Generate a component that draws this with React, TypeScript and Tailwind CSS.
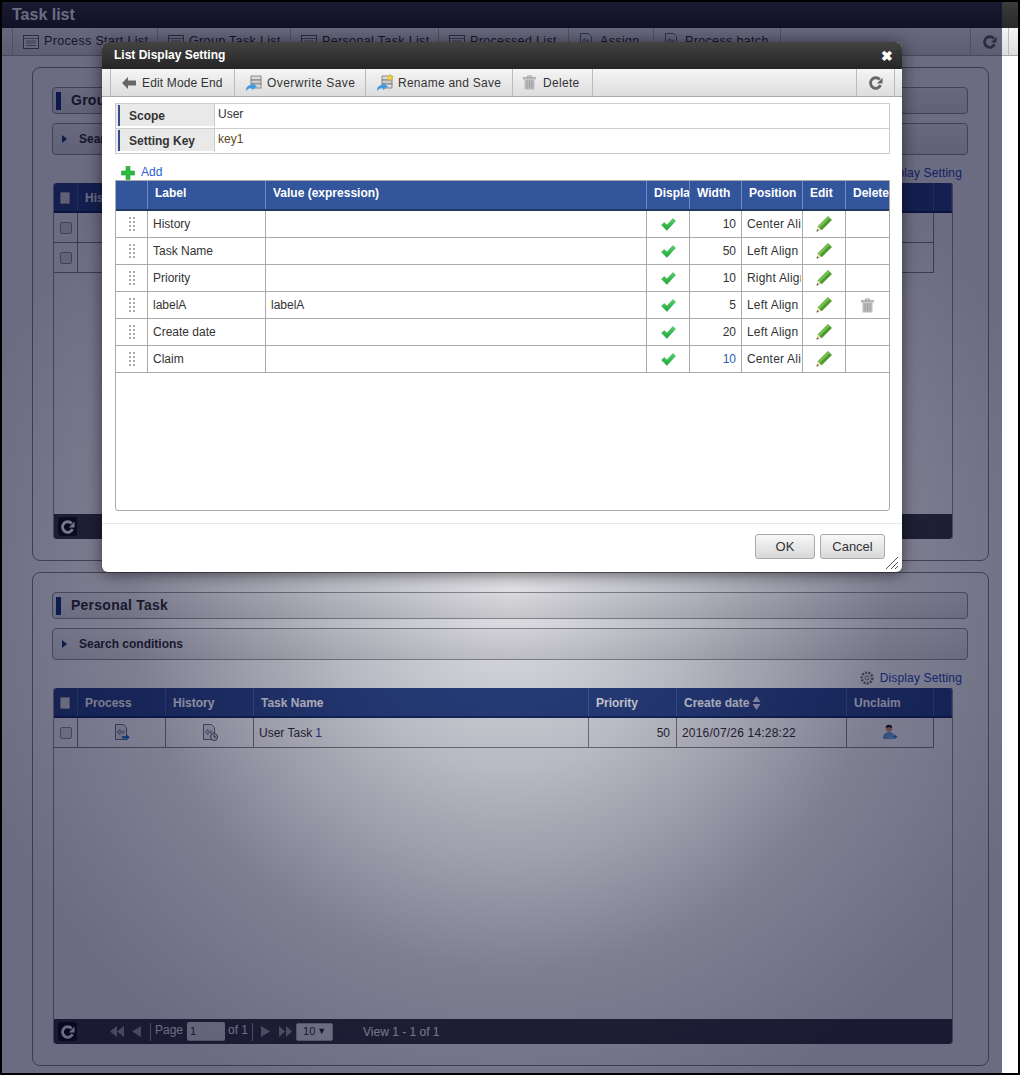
import React from "react";

const font = { fontFamily: '"Liberation Sans", Arial, sans-serif' };

function ListIcon() {
  return (
    <svg width="16" height="14" viewBox="0 0 16 14" className="shrink-0">
      <rect x="0.5" y="0.5" width="15" height="13" fill="#f4f4f4" stroke="#666" />
      <path d="M0.5 3.5h15" stroke="#888" />
      <path d="M3 6h10M3 8h10M3 10.500h10" stroke="#888" />
    </svg>
  );
}
function DocIcon({ badge }: { badge?: "arrow" | "clock" | "none" }) {
  return (
    <svg width="16" height="17" viewBox="0 0 16 17" className="shrink-0">
      <path d="M1.500 0.500h8l3 3v12h-11z" fill="#e9edf2" stroke="#6c7480" />
      <path d="M3 8l3-3v2h4v2h-4v2z" fill="#b8bec8" stroke="#7a808c" strokeWidth="0.6" />
      {badge === "arrow" && <path d="M8 12h4v-2l4 3.200-4 3.200v-2h-4z" fill="#2b7fd0" />}
      {badge === "clock" && (
        <g>
          <circle cx="12" cy="13" r="3.500" fill="#eee" stroke="#555" />
          <path d="M12 11v2h2" stroke="#444" fill="none" />
        </g>
      )}
    </svg>
  );
}
function PersonIcon() {
  return (
    <svg width="16" height="17" viewBox="0 0 16 17">
      <circle cx="7" cy="4.500" r="3.200" fill="#d49a70" />
      <path d="M3.800 4a3.200 3.200 0 0 1 6.400 0c-2 -1-4.400-1-6.400 0z" fill="#2e2018" />
      <path d="M1 15c0-5 2-7 6-7s6 2 6 7z" fill="#6fa8dc" />
      <path d="M8 12h4v-2l4 2.800-4 2.800v-2h-4z" fill="#2a86d8" stroke="#fff" strokeWidth="0.4" />
    </svg>
  );
}
function ServerIcon({ star }: { star?: boolean }) {
  return (
    <svg width="18" height="18" viewBox="0 0 18 18" className="shrink-0">
      <rect x="6" y="2" width="10" height="4" fill="#d8dbe0" stroke="#777" strokeWidth="0.8" />
      <rect x="6" y="6" width="10" height="4" fill="#c9ccd2" stroke="#777" strokeWidth="0.8" />
      <rect x="6" y="10" width="10" height="4" fill="#d8dbe0" stroke="#777" strokeWidth="0.8" />
      <path d="M1 17c0-4 2-6 6-6v-2l5 3.500-5 3.500v-2c-3 0-4 1-6 3z" fill="#3f9ae0" />
      {star && <path d="M14 0l1 2.200 2.500.3-1.800 1.700.5 2.500-2.200-1.200-2.200 1.200.5-2.500-1.800-1.700 2.500-.3z" fill="#f3d53c" stroke="#c9a614" strokeWidth="0.4" />}
    </svg>
  );
}
function Trash({ size = 14 }: { size?: number }) {
  return (
    <svg width={size - 1} height={size + 1} viewBox="0 0 13 15" className="shrink-0">
      <path d="M4.500 1h4v1.500h-4z" fill="none" stroke="#9a9a9a" />
      <rect x="0.300" y="2.300" width="12.400" height="1.800" fill="#bdbdbd" stroke="#999" strokeWidth="0.5" />
      <path d="M1.500 4.500h10v10h-10z" fill="#bcbcc0" />
      <path d="M4 5.500v8M6.500 5.500v8M9 5.500v8" stroke="#929296" strokeWidth="0.8" />
    </svg>
  );
}
function Reload({ color = "#666", size = 16 }: { color?: string; size?: number }) {
  return (
    <svg width={size} height={size} viewBox="0 0 16 16" className="shrink-0">
      <path d="M13.200 10.500a6 6 0 1 1-1-6.500" fill="none" stroke={color} strokeWidth="3.200" />
      <path d="M15.500 2v6.500h-6.500z" fill={color} />
    </svg>
  );
}
function Check() {
  return (
    <svg width="15" height="13" viewBox="0 0 15 13">
      <defs>
        <linearGradient id="chk" x1="0" y1="0" x2="0" y2="1">
          <stop offset="0" stopColor="#52d468" />
          <stop offset="1" stopColor="#1fa53a" />
        </linearGradient>
      </defs>
      <path d="M0.500 7l2.800-2.600 2.600 2.600 6-6.500 2.600 2.400-8.600 9.600z" fill="url(#chk)" stroke="#1f9a38" strokeWidth="0.4" />
    </svg>
  );
}
function Pencil() {
  return (
    <svg width="16" height="16" viewBox="0 0 16 16">
      <path d="M12 0.500l3.500 3.500-10 10-3.500-3.500z" fill="#4a9a2c" stroke="#2f7a1a" strokeWidth="0.6" />
      <path d="M12 0.500l1.700 1.700-10 10-1.700-1.700z" fill="#74c24a" />
      <path d="M2 10.500l3.500 3.500-5 1.500z" fill="#e8d5a8" />
      <path d="M0.500 15.500l0.600-2.200 1.600 1.600z" fill="#444" />
    </svg>
  );
}
function Gear() {
  return (
    <svg width="14" height="14" viewBox="0 0 14 14">
      <circle cx="7" cy="7" r="5.300" fill="none" stroke="#777" strokeWidth="2.600" strokeDasharray="2 1.200" />
      <circle cx="7" cy="7" r="2" fill="none" stroke="#777" />
    </svg>
  );
}
function Plus() {
  return (
    <svg width="14" height="14" viewBox="0 0 14 14">
      <path d="M5 0.500h4v4.500h4.500v4h-4.500v4.500h-4v-4.500h-4.500v-4h4.500z" fill="#2dbb3f" stroke="#1e9a30" strokeWidth="0.6" />
    </svg>
  );
}
function Handle() {
  return (
    <svg width="6" height="14" viewBox="0 0 6 14">
      {[0, 4, 8, 12].map((y) => (
        <g key={y} fill="#aaaaaa">
          <rect x="0" y={y} width="2" height="2" />
          <rect x="4" y={y} width="2" height="2" />
        </g>
      ))}
    </svg>
  );
}

function TabItem({ w, label, badge }: { w: string; label: string; badge?: boolean }) {
  return (
    <div className={`${w} h-full flex items-center gap-[5px] pl-[10px] border-r border-[#bbb] text-[12.500px] text-[#333] whitespace-nowrap tracking-[0.35px]`}>
      {badge ? <DocIcon badge="none" /> : <ListIcon />}
      {label}
    </div>
  );
}

const taskCols = [
  { w: "w-[24px]", label: "" },
  { w: "w-[88px]", label: "Process" },
  { w: "w-[88px]", label: "History" },
  { w: "w-[335px]", label: "Task Name" },
  { w: "w-[88px]", label: "Priority" },
  { w: "w-[170px]", label: "Create date" },
  { w: "w-[87px]", label: "Unclaim" },
  { w: "flex-1", label: "" },
];

function CheckBox() {
  return <span className="block w-[12px] h-[12px] rounded-[2px] border border-[#999] bg-[#e8e8e8]" />;
}

function TaskHeader({ cols }: { cols: { w: string; label: string }[] }) {
  return (
    <div className="flex h-[30px] bg-[#2f4a8a] border-b-2 border-[#173067] rounded-t-[3px] text-[12px] font-bold text-white">
      {cols.map((c, i) => (
        <div key={i} className={`${c.w} flex items-center pt-[1px] border-r border-[#4a68a8] px-[7px] gap-[3px] whitespace-nowrap overflow-hidden`}>
          {i === 0 && <span className="block w-[12px] h-[12px] -ml-[1px] rounded-[1px] bg-[#e4e4e4] border border-[#aaa]" />}
          {c.label}
          {c.label === "Create date" && (
            <svg width="9" height="14" viewBox="0 0 9 14">
              <path d="M4.500 0l4 6h-8z M4.500 14l4-6h-8z" fill="#c8cfe0" />
            </svg>
          )}
        </div>
      ))}
    </div>
  );
}

function TaskRow({ name }: { name: string }) {
  return (
    <div className="flex w-[880px] h-[30px] border-b border-r border-[#888] text-[12px] text-[#333]">
      <div className="w-[24px] flex items-center justify-center border-r border-[#888]"><CheckBox /></div>
      <div className="w-[88px] flex items-center justify-center border-r border-[#888]"><DocIcon badge="arrow" /></div>
      <div className="w-[88px] flex items-center justify-center border-r border-[#888]"><DocIcon badge="clock" /></div>
      <div className="w-[335px] flex items-center px-[5px] border-r border-[#888]">
        {name} <span className="text-[#2a4fa0] ml-[3px]">1</span>
      </div>
      <div className="w-[88px] flex items-center justify-end px-[6px] border-r border-[#888]">50</div>
      <div className="w-[170px] flex items-center px-[5px] border-r border-[#888] tracking-[0.2px]">2016/07/26 14:28:22</div>
      <div className="flex-1 flex items-center justify-center"><PersonIcon /></div>
    </div>
  );
}

function Panel({ title, rows, cols, pager }: { title: string; rows: number; cols: { w: string; label: string }[]; pager?: boolean }) {
  return (
    <section className="w-[957px] h-[494px] border border-[#8a8a8a] rounded-[8px] pl-[19px] pr-[20px] pt-[19px]">
      <div className="h-[27px] border border-[#999] rounded-[4px] flex items-center bg-gradient-to-b from-[#f7f7f7] to-[#e6e6e6]">
        <span className="block w-[5px] h-[18px] ml-[3px] bg-[#1f3a80]" />
        <span className="ml-[10px] font-bold text-[14px] tracking-[0.25px] text-[#333]">{title}</span>
      </div>
      <div className="h-[32px] mt-[9px] border border-[#999] rounded-[4px] flex items-center bg-gradient-to-b from-[#f7f7f7] to-[#e6e6e6]">
        <svg width="5" height="8" viewBox="0 0 5 8" className="ml-[9px]"><path d="M0 0l5 4-5 4z" fill="#1f3a80" /></svg>
        <span className="ml-[12px] font-bold text-[12px] text-[#333]">Search conditions</span>
      </div>
      <div className="h-[28px] pt-[8px] flex items-center justify-end gap-[6px] pr-[6px] text-[12px] text-[#2a4fb5] tracking-[0.15px]">
        <Gear />
        <span>Display Setting</span>
      </div>
      <div className="w-[900px] h-[356px] ml-[1px] flex flex-col rounded-[3px] border-x border-[#999]">
        <TaskHeader cols={cols} />
        <div className="flex-1">
          {Array.from({ length: rows }).map((_, i) => (
            <TaskRow key={i} name="User Task" />
          ))}
        </div>
        <div className="h-[25px] bg-[#3e3e44] rounded-b-[3px] flex items-center pl-[4px] text-[12px] text-white">
          <span className="w-[19px] h-[19px] rounded-[3px] bg-[#15151f] flex items-center justify-center">
            <Reload color="#fff" size={14} />
          </span>
          {pager && (
            <div className="flex items-center ml-[33px]">
              <svg width="33" height="11" viewBox="0 0 33 11">
                <path d="M7 0v11l-7-5.500zM14 0v11l-7-5.500zM31 0v11l-9-5.500z" fill="#aaa" />
              </svg>
              <span className="block w-px h-[18px] bg-[#aaa] ml-[7px] mr-[4px]" />
              <span className="-mt-[3px]">Page</span>
              <span className="block w-[38px] h-[19px] ml-[4px] mr-[3px] rounded-[2px] bg-[#e8e8e8] border-b border-[#bbb] text-[#333] text-[11px] pl-[3px] leading-[19px]">1</span>
              <span className="-mt-[3px]">of 1</span>
              <span className="block w-px h-[18px] bg-[#aaa] ml-[4px] mr-[8px]" />
              <svg width="31" height="11" viewBox="0 0 31 11" className="mr-[4px]">
                <path d="M0 0v11l9-5.500zM18 0v11l6-5.500zM25 0v11l6-5.500z" fill="#aaa" />
              </svg>
              <span className="w-[37px] h-[18px] rounded-[2px] bg-[#eee] border border-[#bbb] flex items-center justify-between px-[6px] text-[#333] text-[11px]">
                10 <span className="text-[9px]">▼</span>
              </span>
              <span className="ml-[30px] font-normal">View 1 - 1 of 1</span>
            </div>
          )}
        </div>
      </div>
    </section>
  );
}

function ToolBtn({ w, icon, label, track }: { w: string; icon: React.ReactNode; label: string; track: string }) {
  return (
    <div className={`${w} ${track} h-full flex items-center gap-[4px] pl-[10px] border-r border-[#bbb] text-[12px] text-[#333] whitespace-nowrap`}>
      {icon}
      {label}
    </div>
  );
}

const headerCols = [
  { w: "w-[32px]", label: "" },
  { w: "w-[118px]", label: "Label" },
  { w: "w-[381px]", label: "Value (expression)" },
  { w: "w-[43px]", label: "Display" },
  { w: "w-[52px]", label: "Width" },
  { w: "w-[61px]", label: "Position" },
  { w: "w-[43px]", label: "Edit" },
  { w: "w-[43px]", label: "Delete" },
];

const settingRows = [
  { label: "History", value: "", width: "10", pos: "Center Align", del: false, blue: false },
  { label: "Task Name", value: "", width: "50", pos: "Left Align", del: false, blue: false },
  { label: "Priority", value: "", width: "10", pos: "Right Align", del: false, blue: false },
  { label: "labelA", value: "labelA", width: "5", pos: "Left Align", del: true, blue: false },
  { label: "Create date", value: "", width: "20", pos: "Left Align", del: false, blue: false },
  { label: "Claim", value: "", width: "10", pos: "Center Align", del: false, blue: true },
];

function Modal() {
  const cell = "flex items-center border-r border-[#aaa] overflow-hidden whitespace-nowrap";
  return (
    <div className="absolute left-[100px] top-[40px] w-[800px] h-[530px] bg-white rounded-[6px] shadow-[0_2px_16px_rgba(0,0,0,0.55)] flex flex-col">
      <div className="h-[27px] shrink-0 rounded-t-[6px] bg-gradient-to-b from-[#434343] to-[#252525] flex items-center justify-between pb-[2px] pl-[12px] pr-[9px] text-white font-bold text-[12px]">
        <span>List Display Setting</span>
        <span className="text-[14px] leading-none mt-[2px]">✖</span>
      </div>
      <div className="h-[28px] shrink-0 flex pl-[8px] pr-[7px] border-b border-[#aaa] bg-gradient-to-b from-[#f5f5f5] to-[#dddddd]">
        <div className="border-l border-[#bbb] h-full" />
        <ToolBtn w="w-[124px]" track="tracking-[0.15px]" label="Edit Mode End" icon={
          <svg width="14" height="12" viewBox="0 0 14 12" className="mr-[2px] ml-[1px]"><path d="M0 6l6-6v3.500h8v5h-8v3.500z" fill="#666" /></svg>
        } />
        <ToolBtn w="w-[131px]" track="tracking-[0.45px]" label="Overwrite Save" icon={<ServerIcon />} />
        <ToolBtn w="w-[147px]" track="tracking-[0.25px]" label="Rename and Save" icon={<ServerIcon star />} />
        <ToolBtn w="w-[80px]" track="tracking-[0.3px]" label="Delete" icon={<span className="mr-[3px]"><Trash /></span>} />
        <div className="flex-1 border-r border-[#bbb]" />
        <div className="w-[38px] border-r border-[#bbb] flex items-center justify-center"><Reload color="#666" size={14} /></div>
      </div>

      <div className="ml-[13px] w-[775px] mt-[6px] border border-[#ccc] text-[12px] text-[#333]">
        <div className="flex h-[25px] border-b border-[#ccc]">
          <div className="w-[99px] h-full bg-[#e9e9e9] border-r border-[#ccc] border-b-2 border-b-white flex items-center">
            <span className="block ml-[2px] w-[2px] h-[21px] bg-[#2f4f8f]" />
            <span className="ml-[9px] font-bold mt-[1px]">Scope</span>
          </div>
          <div className="pl-[3px] pt-[1px]">User</div>
        </div>
        <div className="flex h-[24px]">
          <div className="w-[99px] h-full bg-[#e9e9e9] border-r border-[#ccc] border-b-2 border-b-white flex items-center">
            <span className="block ml-[2px] w-[2px] h-[21px] bg-[#2f4f8f]" />
            <span className="ml-[9px] font-bold mt-[1px]">Setting Key</span>
          </div>
          <div className="pl-[3px] pt-[1px] text-[#5c4a24]">key1</div>
        </div>
      </div>

      <div className="h-[26px] ml-[19px] flex items-end gap-[6px] text-[12px] text-[#2a5fd0]">
        <Plus />
        <span className="-mb-[1px]">Add</span>
      </div>

      <div className="ml-[13px] w-[775px] h-[331px] border border-[#aaa] rounded-b-[3px] text-[12px] text-[#333]">
        <div className="flex h-[30px] bg-[#33559b] border-b-2 border-[#23385f] text-white font-bold">
          {headerCols.map((c, i) => (
            <div key={i} className={`${c.w} flex items-start pt-[3px] pl-[7px] border-r border-[#6f8ac0] last:border-r-0 overflow-hidden whitespace-nowrap`}>
              {c.label}
            </div>
          ))}
        </div>
        {settingRows.map((r) => (
          <div key={r.label} className="flex h-[27px] border-b border-[#aaa]">
            <div className={`${cell} w-[32px] justify-center`}><Handle /></div>
            <div className={`${cell} w-[118px] pl-[5px]`}>{r.label}</div>
            <div className={`${cell} w-[381px] pl-[5px]`}>{r.value}</div>
            <div className={`${cell} w-[43px] justify-center`}><Check /></div>
            <div className={`${cell} w-[52px] justify-end pr-[5px] ${r.blue ? "text-[#2a5fb5]" : ""}`}>{r.width}</div>
            <div className={`${cell} w-[61px] pl-[5px] tracking-[0.2px]`}>
              <span className="block w-[54px] overflow-hidden">{r.pos}</span>
            </div>
            <div className={`${cell} w-[43px] justify-center`}><Pencil /></div>
            <div className="w-[43px] flex items-center justify-center">{r.del && <Trash />}</div>
          </div>
        ))}
      </div>

      <div className="mt-[12px] flex-1 border-t border-[#e8e8e8] relative">
        <div className="flex justify-end gap-[5px] pr-[17px] pt-[10px]">
          <button className="w-[60px] h-[25px] rounded-[3px] border border-[#aaa] bg-gradient-to-b from-[#f8f8f8] to-[#d8d8d8] text-[13px] text-[#333]">OK</button>
          <button className="w-[65px] h-[25px] rounded-[3px] border border-[#aaa] bg-gradient-to-b from-[#f8f8f8] to-[#d8d8d8] text-[13px] text-[#333]">Cancel</button>
        </div>
        <svg width="12" height="12" viewBox="0 0 12 12" className="absolute right-[4px] bottom-[3px]">
          <path d="M0 12L12 0M5 12L12 5M9 12L12 9" stroke="#555" />
        </svg>
      </div>
    </div>
  );
}

export default function App() {
  return (
    <div className="relative w-[1020px] h-[1075px] border-2 border-black bg-white overflow-hidden" style={font}>
      <div className="h-[26px] bg-gradient-to-b from-[#3c3c3c] to-[#282828] flex items-center pl-[10px] text-white font-bold text-[16px]">
        Task list
      </div>
      <div className="h-[28px] flex pl-[10px] border-b border-[#aaa] bg-gradient-to-b from-[#f5f5f5] to-[#dddddd]">
        <div className="border-l border-[#bbb] h-full" />
        <TabItem w="w-[145px]" label="Process Start List" />
        <TabItem w="w-[133px]" label="Group Task List" />
        <TabItem w="w-[148px]" label="Personal Task List" />
        <TabItem w="w-[130px]" label="Processed List" />
        <TabItem w="w-[85px]" label="Assign" badge />
        <TabItem w="w-[127px]" label="Process batch" badge />
        <div className="w-[190px] border-r border-[#bbb]" />
        <div className="w-[38px] border-r border-[#bbb] flex items-center justify-center"><Reload size={14} /></div>
      </div>

      <div className="w-[1000px] pl-[30px] pt-[11px] flex flex-col gap-[11px]">
        <Panel title="Group Task" rows={2} cols={[taskCols[0], { w: "w-[88px]", label: "History" }, { w: "w-[335px]", label: "Task Name" }, { w: "w-[88px]", label: "Priority" }, { w: "w-[170px]", label: "Create date" }, { w: "w-[87px]", label: "Claim" }, { w: "w-[88px]", label: "" }, { w: "flex-1", label: "" }]} />
        <Panel title="Personal Task" rows={1} cols={taskCols} pager />
      </div>

      <div className="absolute left-0 top-0 w-[1000px] h-[1071px] bg-[radial-gradient(circle_at_508px_588px,rgba(0,0,38,0.12)_0%,rgba(0,0,38,0.28)_180px,rgba(0,0,38,0.5)_380px,rgba(0,0,38,0.58)_560px)]" />
      <Modal />
    </div>
  );
}
